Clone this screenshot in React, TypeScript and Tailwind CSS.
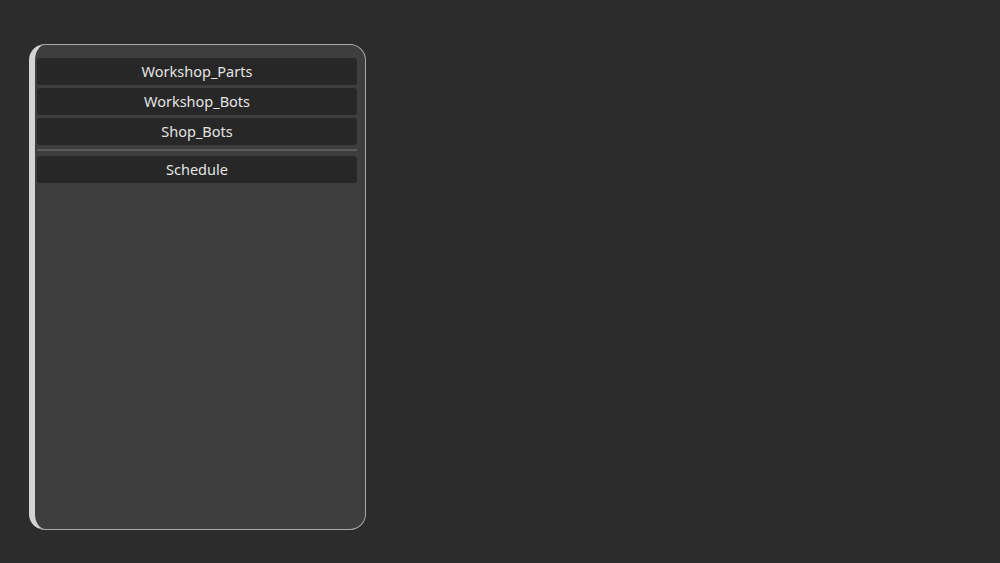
import React from 'react';

const items = ['Workshop_Parts', 'Workshop_Bots', 'Shop_Bots'];

const MenuButton = ({ label }: { label: string }) => (
  <button className="h-[27px] w-full rounded-[3px] bg-[#272727] text-[14.5px] text-[#e4e4e4] flex items-center justify-center">
    {label}
  </button>
);

const App = () => {
  return (
    <div
      className="w-[1000px] h-[563px] bg-[#2c2c2c] pt-[44px] pl-[29px]"
      style={{ fontFamily: '"Noto Sans", "Open Sans", sans-serif' }}
    >
      <div className="w-[337px] h-[486px] rounded-[16px] bg-[#3e3e3e] border border-[#a9a9a9] border-l-[6px] border-l-[#d4d4d4] pt-[13px] pl-[2px] pr-[8px]">
        <div className="flex flex-col gap-[3px]">
          {items.map((it) => (
            <MenuButton key={it} label={it} />
          ))}
        </div>
        <div className="mt-[4px] mb-[5px] h-[2px] bg-[#5c5c5c]" />
        <MenuButton label="Schedule" />
      </div>
    </div>
  );
};

export default App;
